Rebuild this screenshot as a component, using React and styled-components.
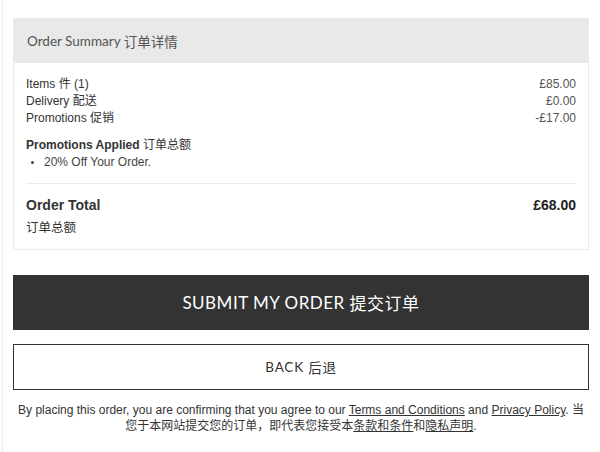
import React from 'react'
import styled, { createGlobalStyle } from 'styled-components'

const GlobalStyle = createGlobalStyle`
    html, body {
        margin: 0;
        padding: 0;
        background: #fff;
    }
    body {
        font-family: 'Liberation Sans', Arial, 'Noto Sans CJK SC', sans-serif;
        color: #333;
    }
`

const CJK = `'Noto Sans CJK SC', sans-serif`
const GEO = `Lato, 'Noto Sans CJK SC', sans-serif`

const Page = styled.div`
    margin-left: 2px;
    border-left: 1px solid #ececec;
    padding: 18px 11px 20px 10px;
    min-height: 414px;
`

const Summary = styled.section`
    border: 1px solid #ebebeb;
    border-top: none;
`

const Header = styled.div`
    height: 45px;
    display: flex;
    align-items: center;
    padding: 0 13px;
    background: #e9e9e9;
    font-family: ${GEO};
    font-size: 13.5px;
    font-weight: 400;
    color: #555;
`

const Body = styled.div`
    padding: 12px 12px 13px 12px;
`

const Row = styled.div`
    display: flex;
    justify-content: space-between;
    align-items: baseline;
    font-size: ${({ $big }) => ($big ? '14px' : '12px')};
    font-weight: ${({ $big }) => ($big ? 700 : 400)};
    line-height: ${({ $big }) => ($big ? '20px' : '16px')};
    color: #333;
`

const Amount = styled.span`
    color: ${({ $big }) => ($big ? '#222' : '#555')};
`

const Cn = styled.span`
    font-family: ${CJK};
    font-weight: 400;
`

const Promos = styled.div`
    margin-top: 9px;
    font-size: 12px;
    line-height: 17px;
`

const PromoTitle = styled.div`
    font-weight: 700;
`

const PromoList = styled.ul`
    margin: 0;
    padding-left: 18px;
    color: #444;
    li::marker {
        font-size: 10px;
    }
`

const Divider = styled.hr`
    border: none;
    border-top: 1px solid #ebebeb;
    margin: 12px 0 11px;
`

const TotalNote = styled.div`
    font-family: ${CJK};
    font-size: 12.5px;
    line-height: 18px;
    margin-top: 3px;
`

const Button = styled.button`
    display: flex;
    align-items: center;
    justify-content: center;
    width: 100%;
    box-sizing: border-box;
    font-family: ${GEO};
    letter-spacing: ${({ $primary }) => ($primary ? '0.5px' : '0.8px')};
    cursor: pointer;
    background: ${({ $primary }) => ($primary ? '#333' : '#fff')};
    color: ${({ $primary }) => ($primary ? '#fff' : '#333')};
    border: 1px solid #333;
    height: ${({ $primary }) => ($primary ? '55px' : '46px')};
    font-size: ${({ $primary }) => ($primary ? '17px' : '13.5px')};
    margin-top: ${({ $primary }) => ($primary ? '25px' : '14px')};
`

const Legal = styled.p`
    margin: 12px 0 0;
    text-align: center;
    font-size: 12px;
    line-height: 16px;
    color: #333;
    a {
        color: #333;
        text-decoration: underline;
    }
`

const App = () => (
    <>
        <GlobalStyle />
        <Page>
            <Summary>
                <Header>
                    Order Summary&nbsp;<Cn>订单详情</Cn>
                </Header>
                <Body>
                    <Row>
                        <span>Items <Cn>件</Cn> (1)</span>
                        <Amount>£85.00</Amount>
                    </Row>
                    <Row>
                        <span>Delivery <Cn>配送</Cn></span>
                        <Amount>£0.00</Amount>
                    </Row>
                    <Row>
                        <span>Promotions <Cn>促销</Cn></span>
                        <Amount>-£17.00</Amount>
                    </Row>
                    <Promos>
                        <PromoTitle>
                            Promotions Applied <Cn>订单总额</Cn>
                        </PromoTitle>
                        <PromoList>
                            <li>20% Off Your Order.</li>
                        </PromoList>
                    </Promos>
                    <Divider />
                    <Row $big>
                        <span>Order Total</span>
                        <Amount $big>£68.00</Amount>
                    </Row>
                    <TotalNote>订单总额</TotalNote>
                </Body>
            </Summary>
            <Button $primary>
                SUBMIT MY ORDER&nbsp;<Cn>提交订单</Cn>
            </Button>
            <Button>
                BACK&nbsp;<Cn>后退</Cn>
            </Button>
            <Legal>
                By placing this order, you are confirming that you agree to our{' '}
                <a href="#terms">Terms and Conditions</a> and{' '}
                <a href="#privacy">Privacy Policy</a>. 当您于本网站提交您的订单，即代表您接受本
                <a href="#terms">条款和条件</a>和<a href="#privacy">隐私声明</a>.
            </Legal>
        </Page>
    </>
)

export default App
